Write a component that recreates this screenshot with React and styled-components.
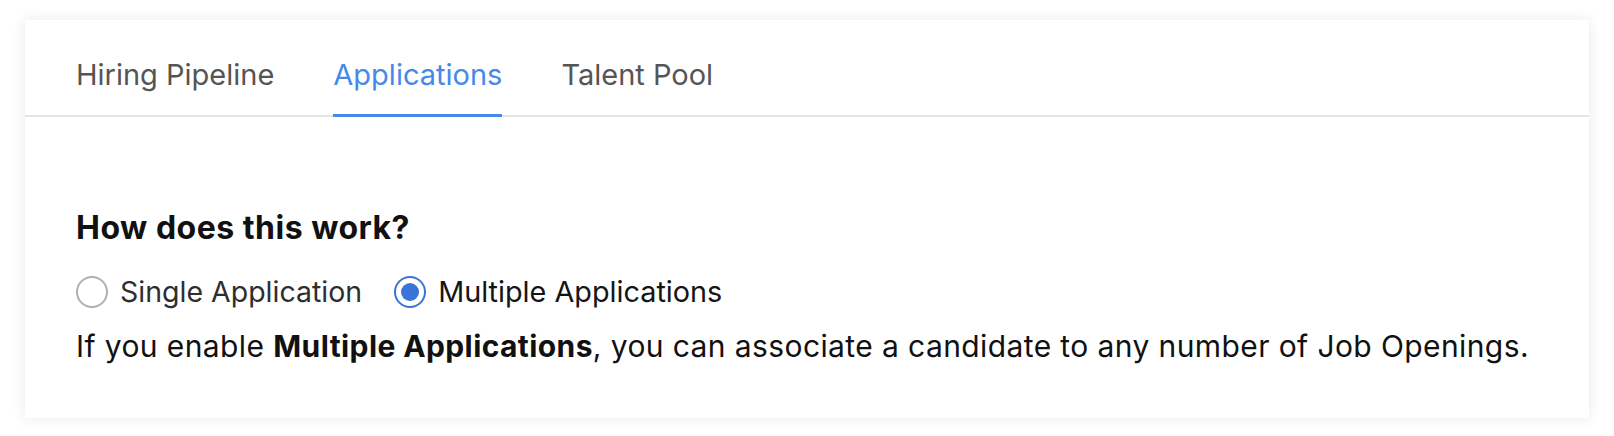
import React, { useState } from 'react'
import styled, { createGlobalStyle } from 'styled-components'

const GlobalStyle = createGlobalStyle`
  body {
    margin: 0;
    background: #ffffff;
    font-family: Inter, "Noto Sans", "Liberation Sans", sans-serif;
  }
`

const tabs = ['Hiring Pipeline', 'Applications', 'Talent Pool']
const modes = ['Single Application', 'Multiple Applications']

const App = () => {
  const [active, setActive] = useState('Applications')
  const [mode, setMode] = useState('Multiple Applications')

  return (
    <Page>
      <GlobalStyle />
      <Card>
        <TabBar>
          {tabs.map((t) => (
            <Tab key={t} $active={t === active} onClick={() => setActive(t)}>
              {t}
            </Tab>
          ))}
        </TabBar>
        <Content>
          <Heading>How does this work?</Heading>
          <RadioGroup>
            {modes.map((m) => (
              <RadioOption key={m} onClick={() => setMode(m)}>
                <Radio $checked={m === mode} />
                <RadioLabel $checked={m === mode}>{m}</RadioLabel>
              </RadioOption>
            ))}
          </RadioGroup>
          <Description>
            If you enable <strong>Multiple Applications</strong>, you can associate a candidate to any number of Job Openings.
          </Description>
        </Content>
      </Card>
    </Page>
  )
}

const Page = styled.div`
  padding: 20px 25px 18px 25px;
`

const Card = styled.div`
  background: #ffffff;
  box-shadow: 0 0 14px rgba(0, 0, 0, 0.09);
  height: 398px;
  box-sizing: border-box;
`

const TabBar = styled.div`
  display: flex;
  gap: 59px;
  padding: 37px 51px 0 51px;
  border-bottom: 2px solid #e4e4e4;
`

const Tab = styled.div`
  font-size: 29px;
  line-height: 35px;
  color: ${(p) => (p.$active ? '#4689e8' : '#555555')};
  padding-bottom: 22px;
  margin-bottom: -2px;
  border-bottom: 3px solid ${(p) => (p.$active ? '#4689e8' : 'transparent')};
  cursor: pointer;
`

const Content = styled.div`
  padding: 92px 51px 0 51px;
  display: flex;
  flex-direction: column;
`

const Heading = styled.h3`
  margin: 0 0 28px 0;
  font-size: 32px;
  line-height: 38px;
  font-weight: 700;
  letter-spacing: 0.5px;
  color: #111111;
`

const RadioGroup = styled.div`
  display: flex;
  align-items: center;
  gap: 32px;
  margin-bottom: 19px;
`

const RadioOption = styled.label`
  display: flex;
  align-items: center;
  gap: 12px;
  cursor: pointer;
`

const Radio = styled.span`
  width: 32px;
  height: 32px;
  box-sizing: border-box;
  border-radius: 50%;
  border: 2px solid ${(p) => (p.$checked ? '#3a74d6' : '#b0b0b0')};
  display: flex;
  align-items: center;
  justify-content: center;
  &::after {
    content: '';
    width: 18px;
    height: 18px;
    border-radius: 50%;
    background: ${(p) => (p.$checked ? '#3a74d6' : 'transparent')};
  }
`

const RadioLabel = styled.span`
  font-size: ${(p) => (p.$checked ? '28.8px' : '28.5px')};
  line-height: 34px;
  color: ${(p) => (p.$checked ? '#151515' : '#2e2e2e')};
`

const Description = styled.p`
  margin: 0;
  font-size: 30px;
  line-height: 36px;
  letter-spacing: 0.4px;
  color: #111111;
  strong {
    font-weight: 700;
  }
`

export default App
